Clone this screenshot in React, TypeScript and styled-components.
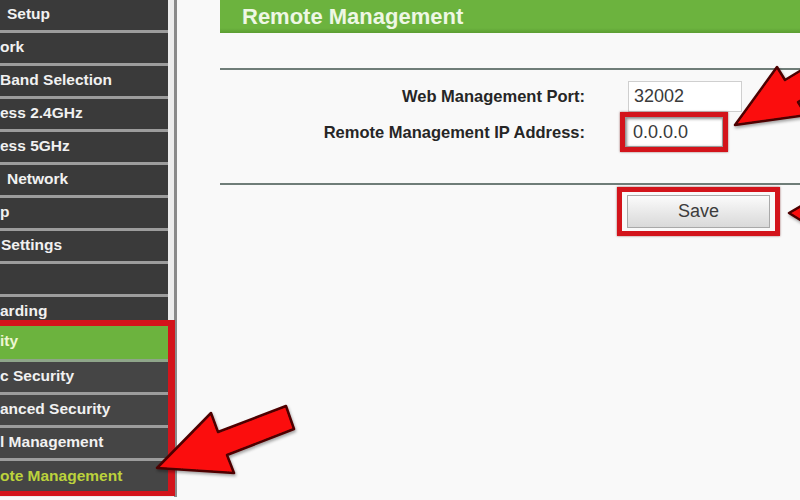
import React from 'react'
import styled, { createGlobalStyle } from 'styled-components'

const colors = {
  navDark: '#3a3a3a',
  navSub: '#454545',
  navLine: '#9c9c9c',
  green: '#6cb33e',
  greenDark: '#5c9d33',
  red: '#d3141b',
  page: '#f9f9f9',
  rule: '#6f7d78',
  text: '#262626',
}

const GlobalStyle = createGlobalStyle`
  html, body {
    margin: 0;
    padding: 0;
    background: ${colors.page};
    overflow: hidden;
  }
  * {
    box-sizing: border-box;
  }
`

const Page = styled.div`
  position: relative;
  display: flex;
  width: 800px;
  height: 500px;
  overflow: hidden;
  background: ${colors.page};
  font-family: 'Liberation Sans', Arial, sans-serif;
`

const Sidebar = styled.nav`
  flex: 0 0 177px;
  width: 177px;
  height: 497px;
  background: #ececec;
  border-right: 3px solid #8a8a8a;
  display: flex;
  flex-direction: column;
`

type Tone = 'top' | 'sub' | 'active' | 'current'

const NavItem = styled.div<{ $tone: Tone; $indent?: number; $last?: boolean }>`
  width: 168px;
  height: ${(p) => (p.$tone === 'active' ? 36 : p.$last ? 30 : 33)}px;
  flex: 0 0 auto;
  display: flex;
  align-items: center;
  padding-left: ${(p) => p.$indent ?? 0}px;
  padding-bottom: ${(p) => (p.$last ? 0 : 3)}px;
  background: ${(p) =>
    p.$tone === 'active' ? colors.green : p.$tone === 'top' ? colors.navDark : colors.navSub};
  border-bottom: ${(p) =>
    p.$last ? 'none' : `3px solid ${p.$tone === 'active' ? '#8fa58a' : colors.navLine}`};
  color: ${(p) =>
    p.$tone === 'current' ? '#bcd23c' : p.$tone === 'active' ? '#eef6d2' : '#f1f1f1'};
  font: 700 15.5px 'Liberation Sans', Arial, sans-serif;
  white-space: nowrap;
  overflow: hidden;
`

// red highlight drawn over the bottom of the row above it
const SecurityGroup = styled.div`
  position: relative;
  z-index: 1;
  width: 175px;
  margin-top: -10px;
  border-style: solid;
  border-color: ${colors.red};
  border-width: 6px 7px 5px 0;
  display: flex;
  flex-direction: column;
`

const Main = styled.main`
  flex: 1 1 auto;
  min-width: 0;
  padding-left: 43px;
  overflow: hidden;
`

const Header = styled.div`
  width: 620px;
  height: 33px;
  padding-left: 22px;
  display: flex;
  align-items: center;
  background: linear-gradient(${colors.green} 85%, ${colors.greenDark});
  color: #eef7e4;
  font: 700 22px 'Liberation Sans', Arial, sans-serif;
`

const Rule = styled.div<{ $gap: number }>`
  width: 620px;
  height: 2px;
  margin-top: ${(p) => p.$gap}px;
  background: ${colors.rule};
`

const Form = styled.div`
  margin-top: 11px;
  display: grid;
  grid-template-columns: 365px auto;
  column-gap: 35px;
  align-items: center;
`

const Label = styled.div`
  text-align: right;
  color: ${colors.text};
  font: 700 16.5px 'Liberation Sans', Arial, sans-serif;
`

const Field = styled.div`
  display: flex;
  align-items: center;
  height: 100%;
  padding-left: 5px;
  background: #fff;
  border: 1px solid #cfcfcf;
  color: #3a3a3a;
  font: 400 18px 'Liberation Sans', Arial, sans-serif;
`

const PortField = styled(Field)`
  width: 114px;
  height: 31px;
  margin-left: 8px;
`

const HighlightFrame = styled.div`
  border: 5px solid ${colors.red};
  box-shadow: 0 0 2px rgba(90, 0, 0, 0.6);
`

const IpFrame = styled(HighlightFrame)`
  width: 108px;
  height: 40px;
`

const IpField = styled(Field)`
  padding-left: 7px;
  border-color: #9a9a9a;
  box-shadow: inset 1px 1px 3px rgba(0, 0, 0, 0.45);
`

const SaveRow = styled.div`
  margin-top: 2px;
  padding-left: 397px;
`

const SaveFrame = styled(HighlightFrame)`
  display: inline-block;
  padding: 3px 5px;
`

const SaveButton = styled.button`
  width: 143px;
  height: 33px;
  border: 1px solid #a9a9a9;
  background: linear-gradient(#fbfbfb, #e6e6e6 60%, #d9d9d9);
  color: #3c3c3c;
  font: 400 18px 'Liberation Sans', Arial, sans-serif;
  cursor: pointer;
`

const Annotations = styled.svg`
  position: absolute;
  inset: 0;
  z-index: 2;
  pointer-events: none;
`

const topItems: { label: string; indent: number }[] = [
  { label: 'Setup', indent: 7 },
  { label: 'ork', indent: 0 },
  { label: 'Band Selection', indent: 0 },
  { label: 'ess 2.4GHz', indent: 0 },
  { label: 'ess 5GHz', indent: 0 },
  { label: 'Network', indent: 7 },
  { label: 'p', indent: 0 },
  { label: 'Settings', indent: 1 },
  { label: '', indent: 0 },
  { label: 'arding', indent: 0 },
]

const securityItems = ['c Security', 'anced Security', 'l Management']

const Arrow = ({ points }: { points: string }) => (
  <polygon
    points={points}
    fill="#fb0a0a"
    stroke="#4d0606"
    strokeWidth={2.5}
    strokeLinejoin="round"
    filter="url(#shade)"
  />
)

const App = () => {
  return (
    <Page>
      <GlobalStyle />
      <Sidebar>
        {topItems.map((item, i) => (
          <NavItem key={i} $tone="top" $indent={item.indent}>
            {item.label}
          </NavItem>
        ))}
        <SecurityGroup>
          <NavItem $tone="active">ity</NavItem>
          {securityItems.map((label) => (
            <NavItem key={label} $tone="sub">
              {label}
            </NavItem>
          ))}
          <NavItem $tone="current" $last>
            ote Management
          </NavItem>
        </SecurityGroup>
      </Sidebar>

      <Main>
        <Header>Remote Management</Header>
        <Rule $gap={35} />
        <Form>
          <Label>Web Management Port:</Label>
          <PortField>32002</PortField>
          <Label>Remote Management IP Address:</Label>
          <IpFrame>
            <IpField>0.0.0.0</IpField>
          </IpFrame>
        </Form>
        <Rule $gap={31} />
        <SaveRow>
          <SaveFrame>
            <SaveButton type="button">Save</SaveButton>
          </SaveFrame>
        </SaveRow>
      </Main>

      <Annotations width="800" height="500" viewBox="0 0 800 500">
        <defs>
          <filter id="shade" x="-20%" y="-20%" width="140%" height="140%">
            <feDropShadow dx="1" dy="2" stdDeviation="1.5" floodColor="#000" floodOpacity="0.35" />
          </filter>
        </defs>
        <Arrow points="735,125 777,67 785,80 871,28 885,52 798,102 806,115" />
        <Arrow points="789,213 815,198 815,229" />
        <Arrow points="157,468 211,413 218,432 286,406 294,429 227,455 234,473" />
      </Annotations>
    </Page>
  )
}

export default App
